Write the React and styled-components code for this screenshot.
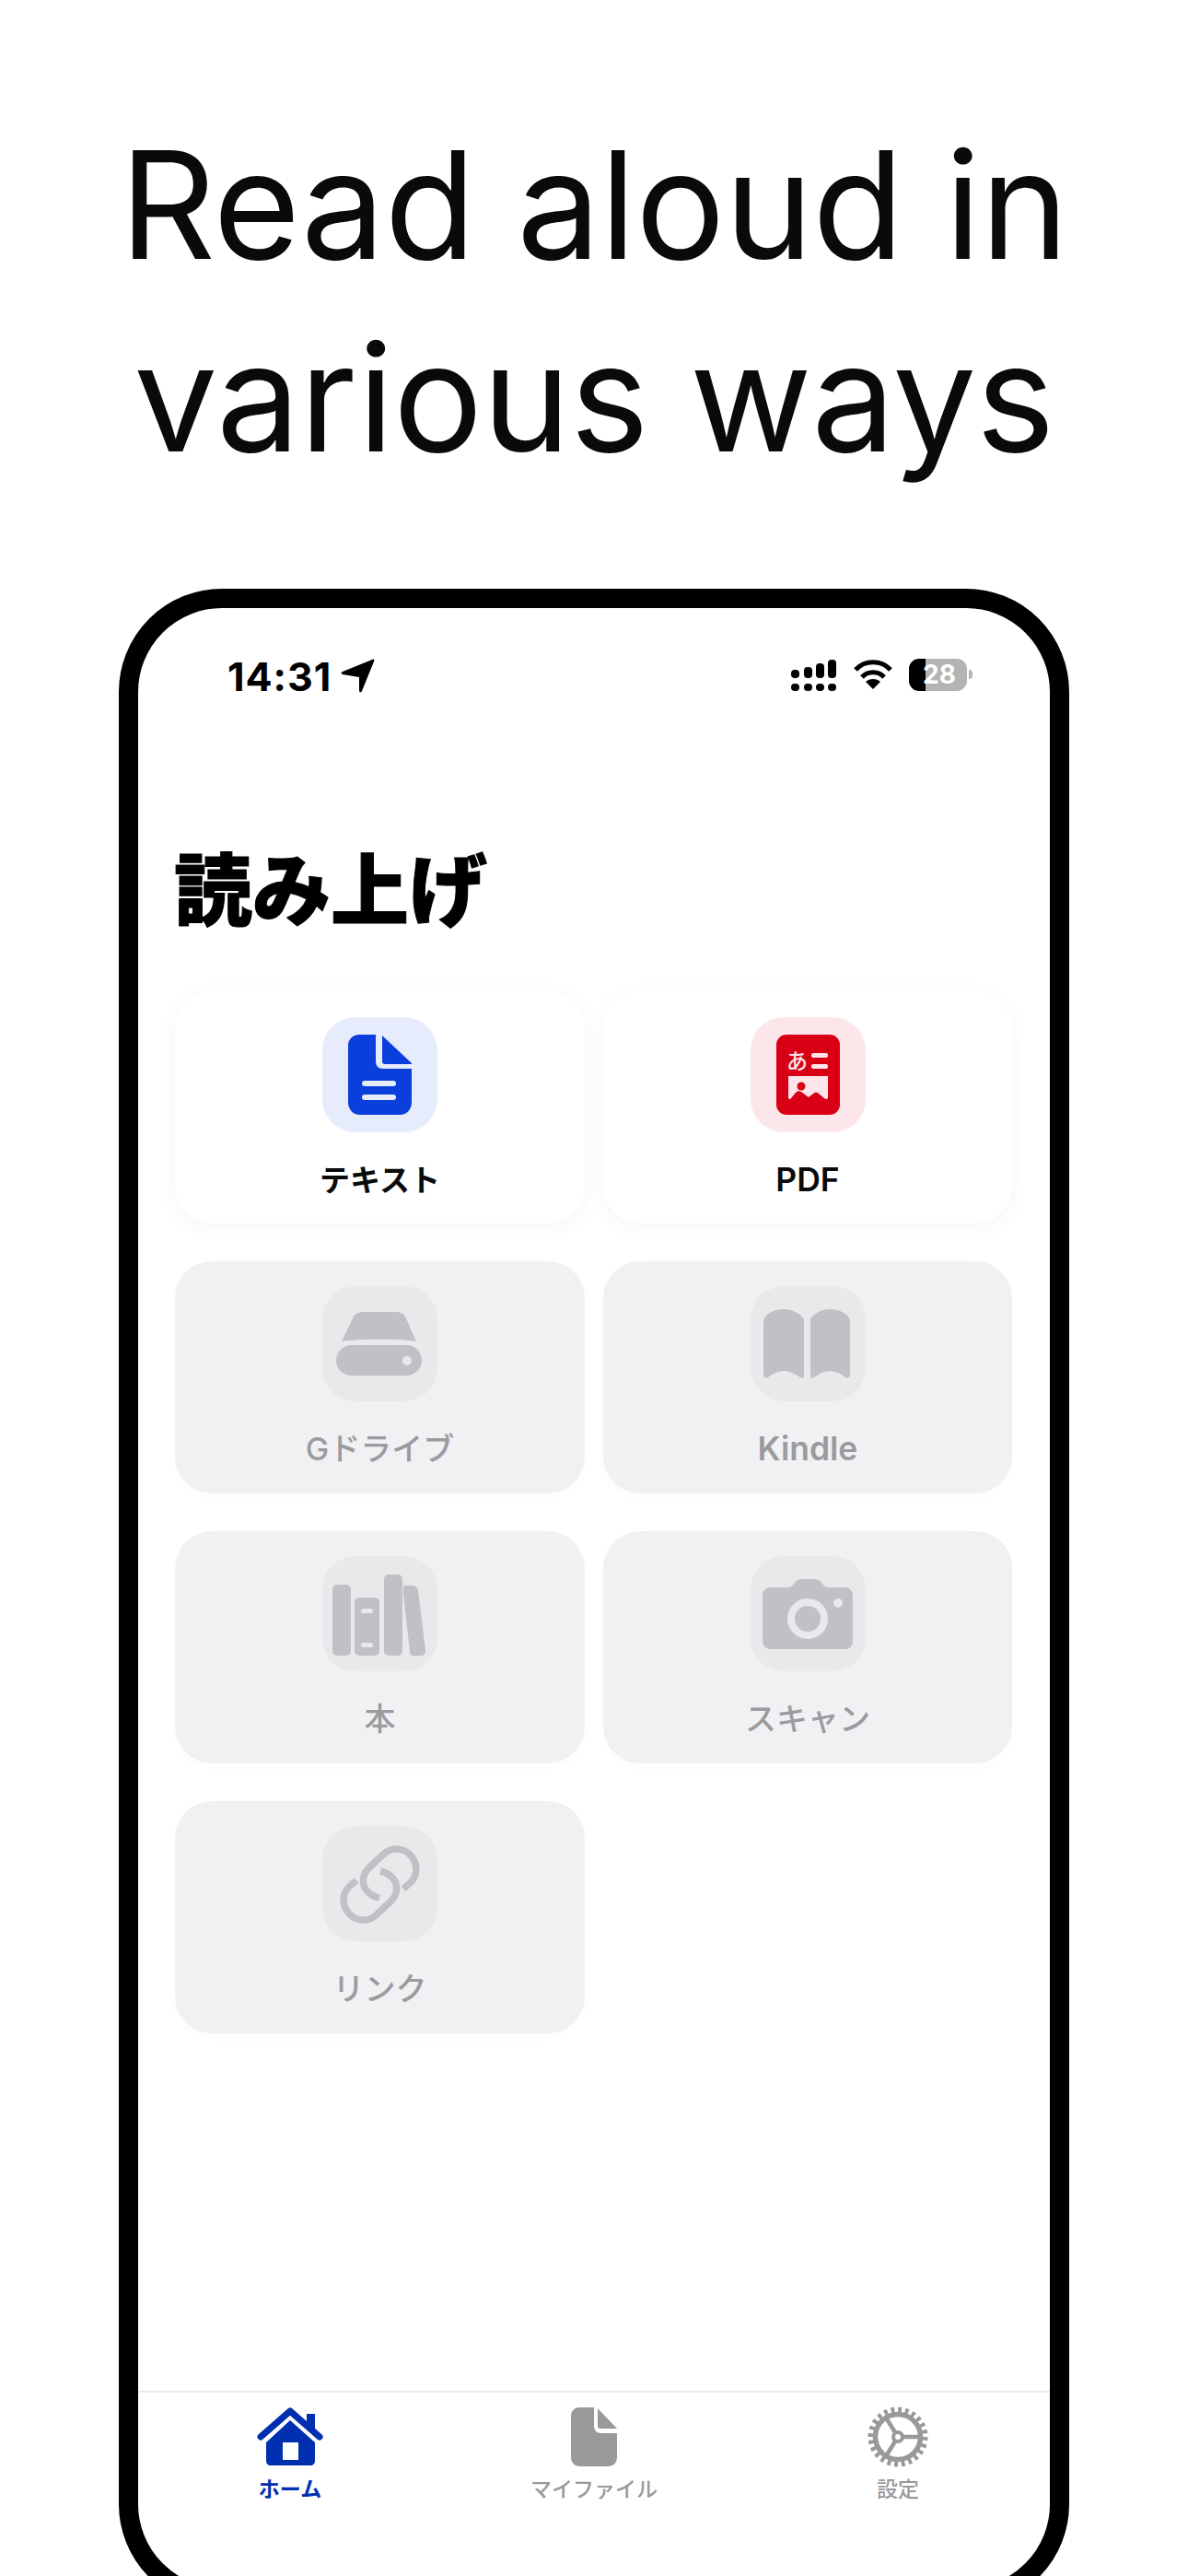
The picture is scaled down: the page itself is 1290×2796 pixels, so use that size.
import React from "react";
import styled, { createGlobalStyle } from "styled-components";

const Global = createGlobalStyle`
  html, body { margin: 0; padding: 0; background: #fff; }
  body { font-family: Inter, "Noto Sans CJK JP", sans-serif; }
`;

const Page = styled.div`
  width: 1290px;
  height: 2796px;
  overflow: hidden;
  background: #fff;
`;

const Headline = styled.h1`
  margin: 0;
  padding-top: 118px;
  height: 639px;
  box-sizing: border-box;
  text-align: center;
  font: 400 162px/209px Inter, sans-serif;
  letter-spacing: -0.5px;
  color: #0a0a0a;
`;

const Phone = styled.div`
  box-sizing: border-box;
  width: 1032px;
  height: 2191px;
  margin-left: 129px;
  border: 21px solid #000;
  border-radius: 112px;
  overflow: hidden;
  background: #fff;
`;

const Screen = styled.div`
  height: 100%;
  display: flex;
  flex-direction: column;
`;

const StatusBar = styled.div`
  box-sizing: border-box;
  height: 100px;
  padding: 55px 90px 0 97px;
  display: flex;
  justify-content: space-between;
  align-items: flex-start;
`;

const TimeGroup = styled.div`
  display: flex;
  align-items: center;
  gap: 10px;
`;

const Time = styled.span`
  font: 700 43px/36px Inter, sans-serif;
  letter-spacing: 1px;
  color: #000;
`;

const StatusIcons = styled.div`
  display: flex;
  align-items: flex-start;
  gap: 18px;
`;

const Battery = styled.div`
  position: relative;
  width: 63px;
  height: 35px;
  border-radius: 11px;
  background: linear-gradient(90deg, #000 0 18px, #b4b4b4 18px);
  display: flex;
  align-items: center;
  justify-content: center;
  padding-left: 3px;
  box-sizing: border-box;
  font: 700 28px/35px Inter, sans-serif;
  color: #fff;
  &::after {
    content: "";
    position: absolute;
    right: -6px;
    top: 12px;
    width: 4px;
    height: 10px;
    border-radius: 0 5px 5px 0;
    background: #b4b4b4;
  }
`;

const Title = styled.h2`
  margin: 159px 0 0 39px;
  font: 900 85px/84px "Noto Sans CJK JP", sans-serif;
  -webkit-text-stroke: 1px #000;
  color: #000;
`;

const Grid = styled.div`
  margin: 73px 0 0 40px;
  display: grid;
  grid-template-columns: 445px 444px;
  grid-auto-rows: 252px;
  column-gap: 20px;
  row-gap: 41px;
`;

const Card = styled.div`
  box-sizing: border-box;
  padding-top: ${(p) => (p.$off ? 27 : 28)}px;
  border-radius: 40px;
  background: ${(p) => (p.$off ? "#f1f1f4" : "#ffffff")};
  box-shadow: 0 4px 22px rgba(0, 0, 0, ${(p) => (p.$off ? 0.012 : 0.045)});
  display: flex;
  flex-direction: column;
  align-items: center;
`;

const Tile = styled.div`
  width: 125px;
  height: 125px;
  border-radius: 36px;
  background: ${(p) => p.$bg};
  svg { display: block; }
`;

const Label = styled.div`
  margin-top: 34px;
  font-size: ${(p) => (p.$latin ? 35.5 : p.$off ? 34 : 33)}px;
  line-height: 36px;
  font-weight: ${(p) => (p.$latin ? 600 : p.$off ? 500 : 700)};
  color: ${(p) => (p.$off ? "#9b9b9f" : "#0a0a0a")};
`;

const TabBar = styled.div`
  margin-top: auto;
  height: 214px;
  box-sizing: border-box;
  border-top: 2px solid #ececec;
  padding-top: 14px;
  display: grid;
  grid-template-columns: repeat(3, 1fr);
`;

const Tab = styled.div`
  display: flex;
  flex-direction: column;
  align-items: center;
  color: ${(p) => (p.$active ? "#0030b0" : "#999999")};
`;

const TabIcon = styled.div`
  height: 68px;
  display: flex;
  align-items: center;
`;

const TabLabel = styled.div`
  margin-top: 10px;
  font-size: 23px;
  line-height: 26px;
  font-weight: ${(p) => (p.$active ? 700 : 500)};
`;

const G = "#c0c0c5";

const Svg = ({ children }) => (
  <svg width="125" height="125" viewBox="0 0 125 125">{children}</svg>
);

const DocIcon = () => (
  <Svg>
    <path fill="#0a3fdc" d="M40 19H58V48C58 53 61 56 66 56H97V92C97 100 92 106 84 106H41C33 106 28 100 28 92V31C28 24 33 19 40 19Z" />
    <path fill="#0a3fdc" d="M65 20L97 50V51H68C66 51 65 50 65 48Z" />
    <rect x="43" y="69" width="37" height="6" rx="3" fill="#e6ecfb" />
    <rect x="43" y="84" width="37" height="6" rx="3" fill="#e6ecfb" />
  </Svg>
);

const PdfIcon = () => (
  <Svg>
    <rect x="28" y="19" width="69" height="87" rx="11" fill="#d90016" />
    <text x="39" y="56" fontSize="23" fontWeight="500" fill="#fce6e9" fontFamily="'Noto Sans CJK JP', sans-serif">あ</text>
    <rect x="66" y="39" width="18" height="5" rx="2" fill="#fce6e9" />
    <rect x="66" y="51" width="18" height="5" rx="2" fill="#fce6e9" />
    <path fill="#fce6e9" d="M41 64H84V87C84 89 82 90 80 88L74 83C72 81 70 81 68 83L63 87L55 81C53 80 51 80 49 82L44 88C43 90 41 89 41 87Z" />
    <circle cx="55" cy="75" r="4.5" fill="#d90016" />
  </Svg>
);

const DriveIcon = () => (
  <Svg>
    <path fill={G} d="M21 60L33 35C35 30 39 28 44 28H80C85 28 89 30 91 35L102 60C88 57 35 57 21 60Z" />
    <rect x="15" y="64" width="93" height="33" rx="16.5" fill={G} />
    <circle cx="92" cy="81" r="5" fill="#e9e9ec" />
  </Svg>
);

const BookIcon = () => (
  <Svg>
    <path fill={G} d="M14 38C16 29 26 25 36 25C45 25 54 29 58 36V97C58 100 56 100 54 99C48 95 42 92 36 92C30 92 24 95 19 99C17 100 14 100 14 96Z" />
    <path fill={G} d="M108 38C106 29 96 25 86 25C77 25 69 29 65 36V97C65 100 67 100 69 99C75 95 80 92 86 92C92 92 98 95 103 99C105 100 108 100 108 96Z" />
  </Svg>
);

const ShelfIcon = () => (
  <Svg>
    <rect x="11" y="31" width="20" height="77" rx="5" fill={G} />
    <rect x="35" y="45" width="27" height="63" rx="5" fill={G} />
    <rect x="42" y="57" width="13" height="5" rx="2.5" fill="#e9e9ec" />
    <rect x="42" y="94" width="13" height="5" rx="2.5" fill="#e9e9ec" />
    <rect x="67" y="20" width="20" height="88" rx="5" fill={G} />
    <path fill={G} d="M88 32H98C101 32 103 34 104 37L112 102C112 106 110 108 107 108H99C96 108 95 106 95 103L88 42Z" />
  </Svg>
);

const CameraIcon = () => (
  <Svg>
    <path fill={G} d="M22 34H40C44 34 46 32 48 29C50 26 53 25 56 25H69C72 25 75 26 77 29C79 32 82 34 86 34H103C108 34 111 38 111 43V92C111 97 108 101 103 101H22C17 101 13 97 13 92V43C13 38 17 34 22 34Z" />
    <circle cx="62" cy="68" r="18" fill="none" stroke="#e9e9ec" strokeWidth="8" />
    <circle cx="95" cy="51" r="5" fill="#e9e9ec" />
  </Svg>
);

const LinkIcon = () => (
  <Svg>
    <g fill="none" stroke={G} strokeWidth="7.5">
      <path d="M88 68L95 62C104 54 104 41 96 32C88 23 75 23 67 30L50 46C42 54 43 66 50 72C53 75 57 77 62 78" />
      <path d="M37 59L30 65C21 73 21 86 29 95C37 104 50 104 58 97L75 81C83 73 82 61 75 55C72 52 68 50 63 49" />
    </g>
  </Svg>
);

const HomeTabIcon = () => (
  <svg width="72" height="64" viewBox="0 0 72 64" fill="currentColor">
    <path d="M54 7H63V24H54Z" />
    <path d="M4 32L36 4L68 32" fill="none" stroke="currentColor" strokeWidth="7" strokeLinecap="round" strokeLinejoin="round" />
    <path fillRule="evenodd" d="M36 14L63 38V58C63 61 61 63 58 63H15C12 63 10 61 10 58V38ZM28 38V57H45V38Z" />
  </svg>
);

const FileTabIcon = () => (
  <svg width="50" height="64" viewBox="0 0 50 64" fill="currentColor">
    <path d="M9 0H25V20C25 25 28 28 33 28H50V54C50 60 46 64 40 64H10C4 64 0 60 0 54V9C0 4 4 0 9 0Z" />
    <path d="M29 1L50 23H32C30 23 29 22 29 20Z" />
  </svg>
);

const GearTabIcon = () => (
  <svg width="66" height="68" viewBox="0 0 66 68" fill="none" stroke="currentColor">
    <circle cx="33" cy="34" r="29.5" strokeWidth="6" strokeDasharray="3.86 3.86" />
    <circle cx="33" cy="34" r="24.5" strokeWidth="5.5" />
    <path d="M33 34L20 13M33 34H57M33 34L20 55" strokeWidth="4.5" />
    <circle cx="33" cy="34" r="5" fill="#fff" strokeWidth="4" />
  </svg>
);

const items = [
  { label: "テキスト", bg: "#e6ecfb", icon: <DocIcon /> },
  { label: "PDF", bg: "#fce6e9", icon: <PdfIcon />, latin: true },
  { label: "Gドライブ", off: true, icon: <DriveIcon /> },
  { label: "Kindle", off: true, icon: <BookIcon />, latin: true },
  { label: "本", off: true, icon: <ShelfIcon /> },
  { label: "スキャン", off: true, icon: <CameraIcon /> },
  { label: "リンク", off: true, icon: <LinkIcon /> },
];

const tabs = [
  { label: "ホーム", active: true, icon: <HomeTabIcon /> },
  { label: "マイファイル", icon: <FileTabIcon /> },
  { label: "設定", icon: <GearTabIcon /> },
];

export default function App() {
  return (
    <Page>
      <Global />
      <Headline>
        Read aloud in
        <br />
        various ways
      </Headline>
      <Phone>
        <Screen>
          <StatusBar>
            <TimeGroup>
              <Time>14:31</Time>
              <svg width="37" height="37" viewBox="0 0 37 37">
                <path fill="#000" d="M34 1C36 0 37 1 36 3L23 35C22 37 20 37 20 34L20 20L2 17C0 16 0 15 2 14Z" />
              </svg>
            </TimeGroup>
            <StatusIcons>
              <svg width="50" height="36" viewBox="0 0 50 36" fill="#000">
                <rect x="0" y="12" width="9" height="9" rx="4" />
                <rect x="14" y="9" width="9" height="12" rx="4" />
                <rect x="27" y="5" width="9" height="16" rx="4" />
                <rect x="40" y="1" width="9" height="20" rx="4" />
                <rect x="0" y="27" width="9" height="8" rx="4" />
                <rect x="14" y="27" width="9" height="8" rx="4" />
                <rect x="27" y="27" width="9" height="8" rx="4" />
                <rect x="40" y="27" width="9" height="8" rx="4" />
              </svg>
              <svg width="42" height="34" viewBox="0 0 42 34" fill="none" stroke="#000" strokeWidth="5">
                <path d="M2 12C12 1 30 1 40 12" />
                <path d="M9 20C15 13 27 13 33 20" />
                <path fill="#000" stroke="none" d="M21 33L13 25C17 21 25 21 29 25Z" />
              </svg>
              <Battery>28</Battery>
            </StatusIcons>
          </StatusBar>
          <Title>読み上げ</Title>
          <Grid>
            {items.map((it) => (
              <Card key={it.label} $off={it.off}>
                <Tile $bg={it.bg || "#e9e9ec"}>{it.icon}</Tile>
                <Label $off={it.off} $latin={it.latin}>{it.label}</Label>
              </Card>
            ))}
          </Grid>
          <TabBar>
            {tabs.map((t) => (
              <Tab key={t.label} $active={t.active}>
                <TabIcon>{t.icon}</TabIcon>
                <TabLabel $active={t.active}>{t.label}</TabLabel>
              </Tab>
            ))}
          </TabBar>
        </Screen>
      </Phone>
    </Page>
  );
}
